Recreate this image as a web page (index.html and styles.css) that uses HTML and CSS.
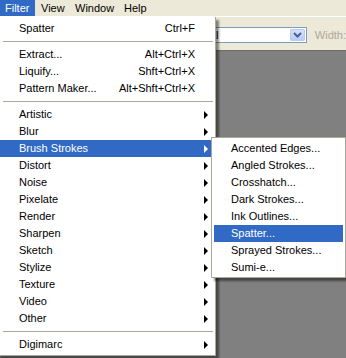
FILE: index.html
```html
<!DOCTYPE html>
<html lang="en">
<head>
  <meta charset="UTF-8">
  <title>Filter menu</title>
  <link rel="stylesheet" href="styles.css">
</head>
<body>

<div class="menubar">
  <span class="mb-item mb-filter active">Filter</span>
  <span class="mb-item mb-view">View</span>
  <span class="mb-item mb-window">Window</span>
  <span class="mb-item mb-help">Help</span>
</div>

<div class="toolbar">
  <div class="combo">
    <span class="combo-text">Normal</span>
    <span class="combo-btn">
      <svg width="9" height="6" viewBox="0 0 9 6"><path d="M1 1 L4.5 4.5 L8 1" fill="none" stroke="#4d6185" stroke-width="2"/></svg>
    </span>
  </div>
  <span class="tb-label">Width:</span>
</div>

<div class="workspace"></div>

<div class="menu main-menu">
  <div class="item"><span class="label">Spatter</span><span class="key">Ctrl+F</span></div>
  <div class="sep"></div>
  <div class="item"><span class="label">Extract...</span><span class="key">Alt+Ctrl+X</span></div>
  <div class="item"><span class="label">Liquify...</span><span class="key">Shft+Ctrl+X</span></div>
  <div class="item"><span class="label">Pattern Maker...</span><span class="key">Alt+Shft+Ctrl+X</span></div>
  <div class="sep"></div>
  <div class="item"><span class="label">Artistic</span><span class="arrow"></span></div>
  <div class="item"><span class="label">Blur</span><span class="arrow"></span></div>
  <div class="item hl has-sub"><span class="label">Brush Strokes</span><span class="arrow"></span>
    <div class="menu sub-menu">
      <div class="item"><span class="label">Accented Edges...</span></div>
      <div class="item"><span class="label">Angled Strokes...</span></div>
      <div class="item"><span class="label">Crosshatch...</span></div>
      <div class="item"><span class="label">Dark Strokes...</span></div>
      <div class="item"><span class="label">Ink Outlines...</span></div>
      <div class="item hl"><span class="label">Spatter...</span></div>
      <div class="item"><span class="label">Sprayed Strokes...</span></div>
      <div class="item"><span class="label">Sumi-e...</span></div>
    </div>
  </div>
  <div class="item"><span class="label">Distort</span><span class="arrow"></span></div>
  <div class="item"><span class="label">Noise</span><span class="arrow"></span></div>
  <div class="item"><span class="label">Pixelate</span><span class="arrow"></span></div>
  <div class="item"><span class="label">Render</span><span class="arrow"></span></div>
  <div class="item"><span class="label">Sharpen</span><span class="arrow"></span></div>
  <div class="item"><span class="label">Sketch</span><span class="arrow"></span></div>
  <div class="item"><span class="label">Stylize</span><span class="arrow"></span></div>
  <div class="item"><span class="label">Texture</span><span class="arrow"></span></div>
  <div class="item"><span class="label">Video</span><span class="arrow"></span></div>
  <div class="item"><span class="label">Other</span><span class="arrow"></span></div>
  <div class="sep"></div>
  <div class="item"><span class="label">Digimarc</span><span class="arrow"></span></div>
</div>

</body>
</html>
```

FILE: styles.css
```css
body {
  margin: 0;
  height: 358px;
  overflow: hidden;
  background: #808080;
  font-family: "Liberation Sans", Arial, sans-serif;
  font-size: 11px;
  color: #000;
  position: relative;
}
.menubar {
  display: flex;
  height: 16px;
  line-height: 16px;
  background: #ece9d8;
}
.mb-item {
  box-sizing: border-box;
  padding-left: 6px;
}
.mb-filter { width: 35px; padding-left: 5px; }
.mb-view { width: 34px; }
.mb-window { width: 49px; }
.mb-help { width: 40px; }
.mb-item.active {
  background: #316ac5;
  color: #fff;
}
.toolbar {
  display: flex;
  align-items: flex-start;
  height: 35px;
  padding-top: 10px;
  box-sizing: border-box;
  background: #ece9d8;
  border-top: 1px solid #fff;
  border-bottom: 1px solid #6a6a6a;
}
.combo {
  display: flex;
  align-items: center;
  margin-left: 211px;
  width: 97px;
  height: 16px;
  box-sizing: border-box;
  border: 1px solid #7f9db9;
  background: #fff;
  overflow: hidden;
}
.combo-text {
  flex: 1;
  line-height: 14px;
  text-indent: -29px;
  white-space: nowrap;
  overflow: hidden;
}
.combo-btn {
  display: flex;
  align-items: center;
  justify-content: center;
  flex: none;
  width: 15px;
  height: 12px;
  margin-right: 1px;
  box-sizing: border-box;
  background: linear-gradient(#d4e1fc, #b6cbf7);
  border: 1px solid #b9cbf2;
  border-radius: 1px;
}
.tb-label {
  margin-left: 8px;
  line-height: 16px;
  color: #aca899;
}
.workspace {
  height: 306px;
  background: #808080;
}
.menu {
  position: absolute;
  background: #fff;
  border: 1px solid #aca899;
  padding: 2px;
  box-shadow: 3px 3px 2px rgba(0, 0, 0, 0.45);
}
.main-menu {
  left: -3px;
  top: 17px;
  width: 213px;
  border-top: none;
  padding-top: 3px;
}
.sub-menu {
  left: 211px;
  top: -3px;
  width: 129px;
  padding-bottom: 1px;
  color: #000;
}
.item {
  display: flex;
  align-items: center;
  height: 17px;
  line-height: 17px;
  padding: 0 5px 0 19px;
  white-space: nowrap;
}
.has-sub {
  position: relative;
}
.sub-menu .item {
  padding-left: 17px;
}
.label {
  flex: 1;
}
.key {
  margin-right: 13px;
}
.arrow {
  width: 0;
  height: 0;
  border-top: 4px solid transparent;
  border-bottom: 4px solid transparent;
  border-left: 4px solid #000;
}
.item.hl {
  background: #316ac5;
  color: #fff;
}
.item.hl > .arrow {
  border-left-color: #fff;
}
.sub-menu .item:not(.hl) {
  color: #000;
}
.sep {
  height: 9px;
  position: relative;
}
.sep::after {
  content: "";
  position: absolute;
  left: 3px;
  right: 0;
  top: 4px;
  border-top: 1px solid #aca899;
}
```
